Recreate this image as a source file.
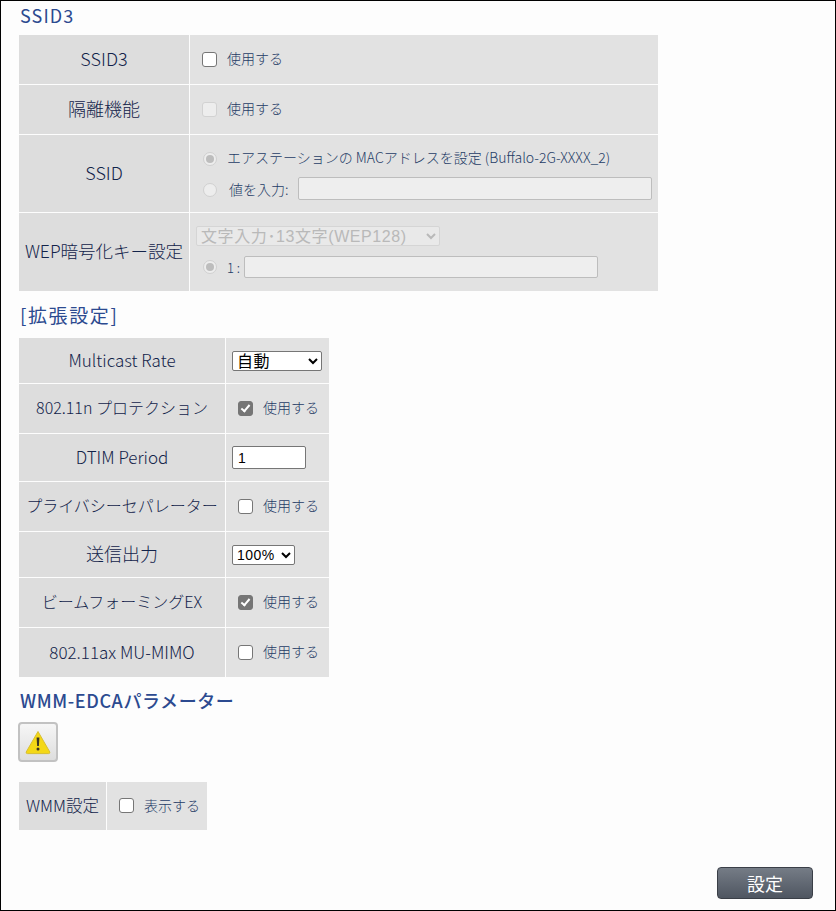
<template>
  <div class="page">
    <h2 class="h h1">SSID3</h2>
    <table class="t t1">
      <tbody>
        <tr class="r49">
          <th class="s18">SSID3</th>
          <td><label class="chk"><input type="checkbox" /><span>使用する</span></label></td>
        </tr>
        <tr class="r49">
          <th class="s18">隔離機能</th>
          <td><label class="chk"><input type="checkbox" disabled /><span>使用する</span></label></td>
        </tr>
        <tr class="r77">
          <th class="s18">SSID</th>
          <td>
            <div class="line l1">
              <input class="rad" type="radio" name="s" checked disabled />
              <span class="small">エアステーションの MACアドレスを設定 (Buffalo-2G-XXXX_2)</span>
            </div>
            <div class="line l2">
              <input class="rad" type="radio" name="s" disabled />
              <span class="val">値を入力:</span>
              <input class="tx tx1" type="text" disabled />
            </div>
          </td>
        </tr>
        <tr class="r78">
          <th class="s17w">WEP暗号化キー設定</th>
          <td>
            <select class="wep" disabled><option>文字入力･13文字(WEP128)</option></select>
            <div class="line l3">
              <input class="rad" type="radio" checked disabled />
              <span class="one">1 :</span>
              <input class="tx tx2" type="text" disabled />
            </div>
          </td>
        </tr>
      </tbody>
    </table>

    <h2 class="h h2">[拡張設定]</h2>
    <table class="t t2">
      <tbody>
        <tr class="a45">
          <th class="s17">Multicast Rate</th>
          <td><select class="sel rate"><option>自動</option></select></td>
        </tr>
        <tr class="a49">
          <th class="s16">802.11n プロテクション</th>
          <td><label class="chk"><input class="on" type="checkbox" checked /><span>使用する</span></label></td>
        </tr>
        <tr class="a47">
          <th class="s17">DTIM Period</th>
          <td><input class="dtim" type="text" value="1" /></td>
        </tr>
        <tr class="a49">
          <th class="s16">プライバシーセパレーター</th>
          <td><label class="chk"><input type="checkbox" /><span>使用する</span></label></td>
        </tr>
        <tr class="a45">
          <th class="s18">送信出力</th>
          <td><select class="sel pow"><option>100%</option></select></td>
        </tr>
        <tr class="a49">
          <th class="s16">ビームフォーミングEX</th>
          <td><label class="chk"><input class="on" type="checkbox" checked /><span>使用する</span></label></td>
        </tr>
        <tr class="a49">
          <th class="s17">802.11ax MU-MIMO</th>
          <td><label class="chk"><input type="checkbox" /><span>使用する</span></label></td>
        </tr>
      </tbody>
    </table>

    <h2 class="h h3">WMM-EDCAパラメーター</h2>
    <button class="warn" type="button" aria-label="警告">
      <svg width="26" height="25" viewBox="0 0 26 25">
        <path d="M13 1.5 L24.8 22 Q25.2 23.6 23.6 23.6 L2.4 23.6 Q.8 23.6 1.2 22 Z" fill="#f4d816" stroke="#d8bf30" stroke-width="1" stroke-linejoin="round" />
        <path d="M11.6 7.5 h2.8 l-.5 8.6 h-1.8 Z" fill="#3b3424" />
        <circle cx="13" cy="19" r="1.5" fill="#3b3424" />
      </svg>
    </button>
    <table class="t t3">
      <tbody>
        <tr>
          <th class="s16w">WMM設定</th>
          <td><label class="chk"><input type="checkbox" /><span>表示する</span></label></td>
        </tr>
      </tbody>
    </table>

    <div class="foot"><button class="save" type="button">設定</button></div>
  </div>
</template>

<style scoped>
.page {
  box-sizing: border-box;
  width: 836px;
  height: 911px;
  border: 1px solid #000;
  background: #fdfdfd;
  padding-left: 18px;
  position: relative;
  font-family: "Noto Sans CJK JP", "Noto Sans", sans-serif;
  font-weight: 300;
  color: #1f3c66;
  overflow: hidden;
}
.h {
  margin: 0;
  padding-left: 1px;
  font-weight: 400;
  color: #2c4a90;
  white-space: nowrap;
}
.h1 { height: 34px; line-height: 28px; font-size: 18px; letter-spacing: 1.1px; }
.h2 { height: 47px; line-height: 48px; font-size: 19px; letter-spacing: 1.6px; }
.h3 { height: 45px; line-height: 46px; font-size: 18px; letter-spacing: .6px; font-weight: 500; }

.t {
  border-collapse: separate;
  border-spacing: 1px;
  table-layout: fixed;
  margin: -1px 0 -1px -1px;
}
.t th, .t td {
  box-sizing: border-box;
  padding: 0;
}
.t th {
  background: #dddddd;
  font-weight: 300;
  color: #12234a;
  text-align: center;
  white-space: nowrap;
  padding-bottom: 3px;
}
.t td { background: #e2e2e2; }
.s16 { font-size: 16px; }
.s16w { font-size: 16.5px; }
.s17 { font-size: 17px; }
.s17w { font-size: 17.5px; }
.s18 { font-size: 18px; }

.t1 { width: 641px; }
.t1 th { width: 170px; }
.t1 td { padding-left: 12px; }
.r49 { height: 49px; }
.r77 { height: 77px; }
.r78 { height: 78px; }

.t2 { width: 312px; }
.t2 th { width: 206px; }
.t2 td { padding-left: 6px; }
.a45 { height: 45px; }
.a47 { height: 47px; }
.a49 { height: 49px; }

.t3 { width: 190px; }
.t3 th { width: 87px; }
.t3 td { padding-left: 12px; }
.t3 tr { height: 48px; }

.chk {
  display: inline-flex;
  align-items: center;
  gap: 10px;
  font-size: 14px;
  color: #1f3c66;
}
.chk span { margin-top: -2px; }
.t2 .chk { padding-left: 6px; }
input[type="checkbox"] {
  appearance: none;
  box-sizing: border-box;
  width: 15px;
  height: 15px;
  margin: 0;
  background: #fff;
  border: 1.4px solid #767676;
  border-radius: 3px;
  position: relative;
}
input[type="checkbox"]:disabled {
  background: #ededed;
  border-color: #d2d2d2;
}
input.on {
  background: #767676;
  border-color: #767676;
}
input.on::after {
  content: "";
  position: absolute;
  left: 4px;
  top: 1px;
  width: 3px;
  height: 7px;
  border: solid #fff;
  border-width: 0 2.4px 2.4px 0;
  transform: rotate(40deg);
}
.rad {
  appearance: none;
  box-sizing: border-box;
  width: 14px;
  height: 14px;
  margin: 0 0 0 1px;
  border: 1.4px solid #d0d0d0;
  border-radius: 50%;
  background: #ededed;
  position: relative;
  flex: none;
}
.rad:checked::after {
  content: "";
  position: absolute;
  inset: 1.6px;
  border-radius: 50%;
  background: #bdbdbd;
}
.line { display: flex; align-items: center; }
.small { font-size: 14px; margin: -4px 0 0 10px; white-space: nowrap; }
.val { font-size: 14px; margin-left: 12px; white-space: nowrap; }
.one { font-size: 13px; margin-left: 10px; width: 17px; flex: none; }
.l1 { height: 24px; }
.l2 { height: 23px; margin-top: 6px; }
.l2 .rad { margin-top: 3px; }
.l3 { height: 22px; margin-top: 10px; }
.tx {
  box-sizing: border-box;
  background: #eeeeee;
  border: 1px solid #bdbdbd;
  border-radius: 2px;
  padding: 0;
  flex: none;
}
.tx1 { width: 354px; height: 23px; margin-left: 9px; }
.tx2 { width: 354px; height: 22px; }
.wep {
  display: block;
  box-sizing: border-box;
  width: 244px;
  height: 20px;
  margin-left: -6px;
  font-family: "Liberation Sans", "Noto Sans CJK JP", sans-serif;
  font-size: 16px;
  font-weight: 400;
  letter-spacing: .6px;
  color: #a8a8a8;
  background: #ececec;
  border: 1px solid #d0d0d0;
  border-radius: 2px;
  padding: 0;
}
.sel {
  box-sizing: border-box;
  height: 20px;
  font-family: "Liberation Sans", "Noto Sans CJK JP", sans-serif;
  font-size: 16px;
  font-weight: 400;
  letter-spacing: .5px;
  color: #000;
  background: #fff;
  border: 1px solid #767676;
  border-radius: 2px;
  padding: 0;
  display: block;
}
.rate { width: 90px; }
.pow { width: 63px; font-size: 14px; }
.dtim {
  display: block;
  box-sizing: border-box;
  width: 74px;
  height: 23px;
  border: 1px solid #767676;
  border-radius: 2px;
  background: #fff;
  padding: 0 5px;
  font-family: "Liberation Sans", sans-serif;
  font-size: 14px;
  color: #000;
}
.warn {
  display: flex;
  align-items: center;
  justify-content: center;
  box-sizing: border-box;
  width: 40px;
  height: 40px;
  margin: 0 0 20px -1px;
  padding: 0;
  border: 2px solid #c2c2c2;
  border-radius: 4px;
  background: linear-gradient(#f6f6f6, #dedede);
}
.warn svg { display: block; }
.foot {
  position: absolute;
  right: 22px;
  bottom: 11px;
}
.save {
  display: block;
  width: 96px;
  height: 32px;
  padding: 0;
  border: 1px solid #3a3f47;
  border-radius: 4px;
  background: linear-gradient(#757c86, #4f5661);
  color: #fff;
  font-family: inherit;
  font-size: 18px;
  font-weight: 400;
}
</style>

<style>
html, body { margin: 0; padding: 0; background: #fdfdfd; }
</style>
